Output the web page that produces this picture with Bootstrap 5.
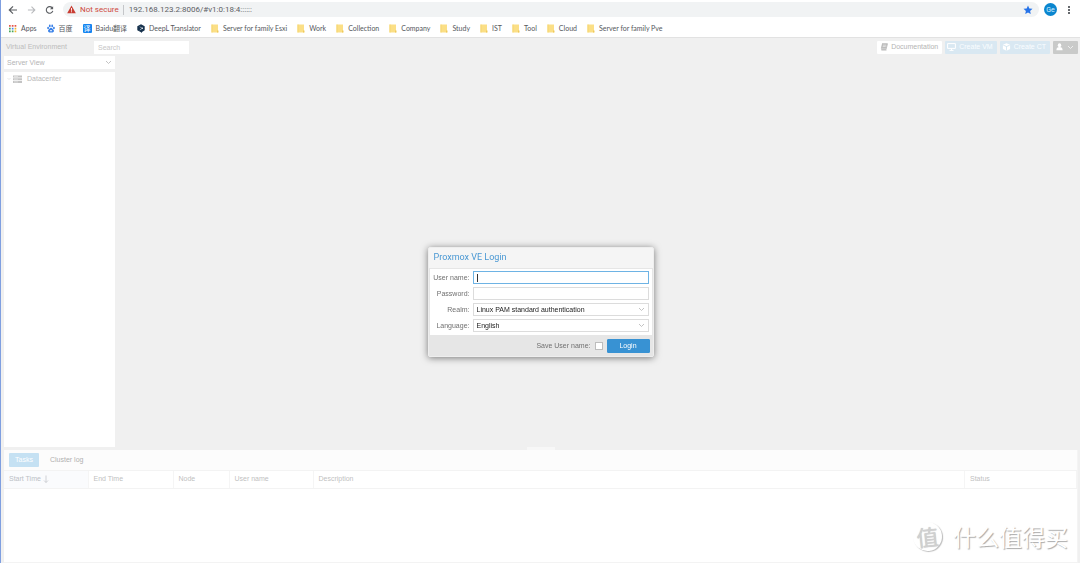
<!DOCTYPE html>
<html lang="en">
<head>
<meta charset="utf-8">
<meta name="viewport" content="width=device-width, initial-scale=1">
<title>Proxmox Virtual Environment</title>
<link href="https://cdn.jsdelivr.net/npm/bootstrap@5.3.0/dist/css/bootstrap.min.css" rel="stylesheet">
<style>
  body { font: 7px/10px "Liberation Sans", Arial, sans-serif; color: #c4c4c4; background: #f0f0f0; border-left: 1px solid #7f9fe0; }
  button, input, select { font: inherit; color: inherit; }
  svg { display: block; flex: none; }
  /* browser chrome */
  .chrome { background: #fff; border-bottom: 1px solid #e2e2e2; font-family: Roboto, "Noto Sans CJK SC", sans-serif; color: #55585c; }
  .address-row { height: 19px; padding: 0 7px; gap: 9px; }
  .icon-btn { border: 0; padding: 0; background: none; }
  .omnibox { background: #f1f3f4; border-radius: 8px; height: 15px; padding: 0 6px 0 4px; font-size: 8px; margin-right: -4px; }
  .omnibox input { border: 0; background: none; outline: 0; padding: 0; color: #5c6064; min-width: 0; }
  .not-secure { color: #cf4a40; margin: 0 4px; }
  .sep { width: 1px; height: 10px; background: #c4c6c9; margin-right: 5px; }
  .avatar { width: 13px; height: 13px; border-radius: 50%; background: #0b86cf; color: #d8efff; font-size: 7px; }
  .bookmarks { height: 18px; padding: 0 7px; gap: 10px; font-family: Lato, "Noto Sans CJK SC", sans-serif; }
  .bookmarks a { color: inherit; text-decoration: none; gap: 4px; white-space: nowrap; }
  .baidu-fy { width: 9px; height: 9px; border-radius: 1px; background: #1484f0; color: #fff; font-size: 7px; line-height: 9px; text-align: center; }
  /* masked application */
  .topbar { height: 17px; padding: 1px 2px 0 5px; gap: 3px; }
  .product { color: #bcbcbc; width: 85px; }
  .search { width: 95px; height: 13px; border: 0; background: #fff; padding: 0 4px; }
  .search::placeholder { color: #c6c6c6; opacity: 1; }
  .tool { border: 0; border-radius: 1px; height: 13px; padding: 0 4px 0 3px; gap: 3px; background: #fff; color: #b4b4b4; }
  .tool-blue { background: #d9e8f2; color: #fafdff; padding: 0 4px 0 2px; }
  .tool-user { background: #c9cac9; color: #fff; gap: 4px; }
  .workspace { padding: 1px 0 3px 3px; }
  .sidebar { width: 111px; gap: 3px; }
  .arrow-select { appearance: none; border: 0; border-radius: 0; background: #fff url("data:image/svg+xml,%3Csvg xmlns='http://www.w3.org/2000/svg' viewBox='0 0 7 5'%3E%3Cpath d='M1 1l2.500 2.500L6 1' fill='none' stroke='%23b4b4b4' stroke-width='.8'/%3E%3C/svg%3E") no-repeat right 3px center / 7px 5px; padding: 0 3px; }
  .view { height: 13px; color: #b4b4b4; }
  .tree { background: #fff; padding: 2px 3px; }
  .tree-item { gap: 5px; color: #b8b8b8; }
  .logs { height: 113px; margin: 0 2px 0 3px; background: #fff; border-right: 1px solid #f4f4f4; border-bottom: 1px solid #f3f3f3; }
  .grip { width: 28px; height: 3px; top: -3px; left: 50%; margin-left: -14px; background: #f7f7f7; }
  .tabs { height: 21px; background: #fcfcfc; padding: 0 5px; gap: 11px; border-bottom: 1px solid #f3f3f3; }
  .tab-btn { border: 0; padding: 0; height: 14px; background: none; color: #b0b0b0; }
  .tab-on { background: #c5e1f3; color: #fff; width: 30px; border-radius: 1px; }
  .grid-head { table-layout: fixed; width: 100%; border-collapse: collapse; }
  .grid-head th { height: 17px; font-weight: 400; color: #bfbfbf; padding: 0 5px; border-right: 1px solid #f5f5f5; border-bottom: 1px solid #f3f3f3; }
  .grid-head th:first-child { background: #fafbfd; color: #bbc0c5; }
  /* login dialog */
  .overlay { inset: 38px 0 0 1px; padding-top: 3px; pointer-events: none; }
  .login { width: 226px; background: #f5f5f5; border: 1px solid #eee; border-radius: 2px; box-shadow: 0 1px 7px rgba(0,0,0,.5); color: #707070; pointer-events: auto; }
  .login h1 { font: 400 9px/18px Roboto, sans-serif; margin: 0; padding: 0 5px 2px; color: #4a98d3; }
  .fields { background: #fff; border: 1px solid #e6e6e6; border-width: 1px 1px 0; margin: 0; padding: 2px 3px 3px 2px; row-gap: 3px; }
  .fields label { width: 38px; text-align: right; margin-right: 3px; white-space: nowrap; }
  .field { height: 13px; min-width: 0; border: 1px solid #dcdcdc; padding: 0 3px; color: #222; outline: 0; background-color: #fff; flex: 1; }
  .field:focus { border-color: #6eb3e4; }
  .caret-field { background: linear-gradient(#333, #333) no-repeat 3px center / 1px 8px #fff; caret-color: transparent; border-color: #6eb3e4; }
  .login-foot { background: #e6e6e6; height: 21px; padding: 0 3px; gap: 4px; }
  .login-foot input { appearance: none; width: 8px; height: 8px; border: 1px solid #bdbdbd; background: #fff; margin: 0; }
  .btn-login { width: 43px; height: 14px; padding: 0; font-size: 7px; line-height: 12px; border: 1px solid #3892d3; border-radius: 1px; background: #3892d3; color: #fff; font-weight: 400; }
  .watermark { right: 9px; bottom: 10px; gap: 11px; font: 23px/32px "Noto Sans CJK SC", sans-serif; color: #fff; text-shadow: 1px 1px 1px #a9a9a9; }
  .seal { width: 29px; height: 29px; border-radius: 50%; line-height: 28px; font-size: 22px; transform: rotate(-6deg); color: #d0d0d0; text-shadow: 0 0 1px #bbb; box-shadow: 1px 1px 1px #bdbdbd; }
</style>
</head>
<body class="vh-100 d-flex flex-column overflow-hidden">
<svg width="0" height="0" class="position-absolute" aria-hidden="true">
  <symbol id="folder" viewBox="0 0 8 9"><path d="M.5.5H7v8H.5z" fill="#fbdf86"/><path d="M.5.5h1v8h-1z" fill="#f6d571"/><path d="M6 6.500h1.500v2H6z" fill="#efc95c"/></symbol>
</svg>
<header class="chrome">
  <div class="address-row d-flex align-items-center">
    <button class="icon-btn" aria-label="Back"><svg width="10" height="10" viewBox="0 0 10 10" fill="none" stroke="#5b5e62" stroke-width="1.200"><path d="M9 5H1.500M5 1.300L1.300 5 5 8.700"/></svg></button>
    <button class="icon-btn" aria-label="Forward"><svg width="9" height="10" viewBox="0 0 10 10" fill="none" stroke="#b8babd" stroke-width="1.200"><path d="M1 5h7.500M5 1.300L8.700 5 5 8.700"/></svg></button>
    <button class="icon-btn" aria-label="Reload"><svg width="9" height="10" viewBox="0 0 10 10"><path d="M8.300 3A3.700 3.700 0 1 0 8.700 6" fill="none" stroke="#5b5e62" stroke-width="1.200"/><path d="M9 .8v3.500H5.500z" fill="#5b5e62"/></svg></button>
    <div class="omnibox d-flex align-items-center flex-fill">
      <svg width="9" height="9" viewBox="0 0 9 9"><path d="M4.500.5L8.800 8.300H.2z" fill="#c83c32"/><path d="M4.500 3v2.700M4.500 6.300v1" stroke="#fff" stroke-width=".9"/></svg>
      <span class="not-secure">Not secure</span><span class="sep"></span>
      <input class="flex-fill" aria-label="Address" value="192.168.123.2:8006/#v1:0:18:4::::::">
      <button class="icon-btn" aria-label="Bookmark"><svg width="10" height="10" viewBox="0 0 10 10"><path d="M5 .6l1.300 2.900 3.200.3-2.400 2.100.7 3.200L5 7.400 2.200 9.100l.7-3.200L.5 3.800l3.200-.3z" fill="#2673e8"/></svg></button>
    </div>
    <button class="icon-btn avatar d-flex align-items-center justify-content-center">Ge</button>
    <button class="icon-btn" aria-label="Menu"><svg width="7" height="10" viewBox="0 0 7 10" fill="#66696d"><path d="M2 1h2v2H2zM2 4h2v2H2zM2 7h2v2H2z"/></svg></button>
  </div>
  <nav class="bookmarks d-flex align-items-center">
    <a href="#" class="d-flex align-items-center"><svg width="9" height="9" viewBox="0 0 9 9"><path d="M1 1h1.700v1.700H1zM3.800 1h1.700v1.700H3.800zM6.600 1h1.700v1.700H6.600z" fill="#e5564a"/><path d="M1 3.800h1.700v1.700H1z" fill="#48a65a"/><path d="M3.800 3.800h1.700v1.700H3.800z" fill="#4285f4"/><path d="M6.600 3.800h1.700v1.700H6.600zM6.600 6.600h1.700v1.700H6.600z" fill="#f3b72f"/><path d="M1 6.600h1.700v1.700H1zM3.800 6.600h1.700v1.700H3.800z" fill="#48a65a"/></svg>Apps</a>
    <a href="#" class="d-flex align-items-center"><svg width="8" height="9" viewBox="0 0 8 9" fill="#3b82e8"><ellipse cx="1.100" cy="4" rx=".9" ry="1.200"/><ellipse cx="2.800" cy="1.900" rx=".9" ry="1.300"/><ellipse cx="5.200" cy="1.900" rx=".9" ry="1.300"/><ellipse cx="6.900" cy="4" rx=".9" ry="1.200"/><path d="M4 3.800c1.200 0 1.600 1.300 2.500 2 .9.800.6 2.600-.9 2.600H2.400C.9 8.400.6 6.600 1.500 5.800c.9-.7 1.300-2 2.500-2z"/><path d="M3 6h2v1.300H3z" fill="#c9def9"/></svg>百度</a>
    <a href="#" class="d-flex align-items-center"><span class="baidu-fy">译</span>Baidu翻译</a>
    <a href="#" class="d-flex align-items-center"><svg width="8" height="9" viewBox="0 0 8 9"><path d="M4 .3l3.700 2v4L5 7.900v1L4 8.300.3 6.300v-4z" fill="#17324d"/><path d="M2.700 2.800l2.600 1.500L2.800 6" fill="none" stroke="#b9c8d6" stroke-width=".7"/><circle cx="5.300" cy="4.300" r=".7" fill="#fff"/></svg>DeepL Translator</a>
    <a href="#" class="d-flex align-items-center"><svg width="8" height="9"><use href="#folder"/></svg>Server for family Esxi</a>
    <a href="#" class="d-flex align-items-center"><svg width="8" height="9"><use href="#folder"/></svg>Work</a>
    <a href="#" class="d-flex align-items-center"><svg width="8" height="9"><use href="#folder"/></svg>Collection</a>
    <a href="#" class="d-flex align-items-center"><svg width="8" height="9"><use href="#folder"/></svg>Company</a>
    <a href="#" class="d-flex align-items-center"><svg width="8" height="9"><use href="#folder"/></svg>Study</a>
    <a href="#" class="d-flex align-items-center"><svg width="8" height="9"><use href="#folder"/></svg>IST</a>
    <a href="#" class="d-flex align-items-center"><svg width="8" height="9"><use href="#folder"/></svg>Tool</a>
    <a href="#" class="d-flex align-items-center"><svg width="8" height="9"><use href="#folder"/></svg>Cloud</a>
    <a href="#" class="d-flex align-items-center"><svg width="8" height="9"><use href="#folder"/></svg>Server for family Pve</a>
  </nav>
</header>

<div class="topbar d-flex align-items-center">
  <span class="product text-nowrap">Virtual Environment</span>
  <input class="search me-auto" placeholder="Search" aria-label="Search">
  <button class="tool d-flex align-items-center"><svg width="8" height="8" viewBox="0 0 8 8"><path d="M2 .7h5.500L6 6.500H1.500v.6h5" fill="none" stroke="#bdbdbd" stroke-width=".9"/><path d="M2 .7h5.300L6 5.800H.8z" fill="#bdbdbd"/><path d="M3 2.200h3M2.700 3.500h3" stroke="#fff" stroke-width=".5"/></svg>Documentation</button>
  <button class="tool tool-blue d-flex align-items-center"><svg width="9" height="8" viewBox="0 0 9 8"><path d="M.6.6h7.800v4.800H.6zM4.500 5.400v1.800M2.500 7.400h4" fill="none" stroke="#fff" stroke-width="1"/></svg>Create VM</button>
  <button class="tool tool-blue d-flex align-items-center"><svg width="9" height="8" viewBox="0 0 8 8"><path d="M4 .3l3.600 1.500v4.300L4 7.800.4 6.100V1.800z" fill="#fff"/><path d="M.8 2.200L4 3.500l3.200-1.300M4 3.500v4" fill="none" stroke="#c6dceb" stroke-width=".7"/></svg>Create CT</button>
  <button class="tool tool-user d-flex align-items-center" aria-label="User menu"><svg width="7" height="8" viewBox="0 0 7 8" fill="#fff"><ellipse cx="3.500" cy="2.300" rx="1.700" ry="2"/><path d="M.4 7.300C.4 5 1.500 4 3.500 4s3.100 1 3.100 3.300z"/></svg><svg width="7" height="5" viewBox="0 0 7 5"><path d="M1 1l2.500 2.500L6 1" fill="none" stroke="#f2f2f2" stroke-width=".9"/></svg></button>
</div>

<main class="workspace d-flex flex-fill">
  <aside class="sidebar d-flex flex-column">
    <select class="arrow-select view" aria-label="View"><option>Server View</option></select>
    <div class="tree flex-fill">
      <div class="tree-item d-flex align-items-center"><svg width="15" height="8" viewBox="0 0 15 8"><path d="M.5 3l1.500 1.500L3.500 3" fill="none" stroke="#dedede" stroke-width=".7"/><path d="M6 .5h9v2H6zM6 3.200h9v2H6zM6 5.900h9v2H6z" fill="#c3c3c3"/><path d="M7 1.500h4M7 4.200h4M7 6.900h4" stroke="#eee" stroke-width=".6"/></svg>Datacenter</div>
    </div>
  </aside>
</main>

<section class="logs position-relative">
  <div class="grip position-absolute"></div>
  <div class="tabs d-flex align-items-center">
    <button class="tab-btn tab-on">Tasks</button>
    <button class="tab-btn">Cluster log</button>
  </div>
  <table class="grid-head">
    <colgroup><col width="84"><col width="85"><col width="56"><col width="84"><col><col width="112"></colgroup>
    <thead><tr><th><span class="d-flex align-items-center">Start Time&nbsp;<svg width="6" height="8" viewBox="0 0 6 8"><path d="M3 .5v7M1 5.500l2 2 2-2" fill="none" stroke="#c4c8cc" stroke-width=".8"/></svg></span></th><th>End Time</th><th>Node</th><th>User name</th><th>Description</th><th>Status</th></tr></thead>
  </table>
  <div class="watermark position-absolute d-flex align-items-center"><span class="seal text-center">值</span><span>什么值得买</span></div>
</section>

<div class="overlay position-fixed d-flex align-items-center justify-content-center">
  <form class="login">
    <h1>Proxmox VE Login</h1>
    <div class="fields d-flex flex-column">
      <div class="d-flex align-items-center"><label for="user">User name:</label><input class="field caret-field" id="user" autofocus></div>
      <div class="d-flex align-items-center"><label for="pass">Password:</label><input class="field" id="pass" type="password"></div>
      <div class="d-flex align-items-center"><label for="realm">Realm:</label><select class="field arrow-select" id="realm"><option>Linux PAM standard authentication</option></select></div>
      <div class="d-flex align-items-center"><label for="lang">Language:</label><select class="field arrow-select" id="lang"><option>English</option></select></div>
    </div>
    <div class="login-foot d-flex align-items-center justify-content-end">
      <label for="save">Save User name:</label><input type="checkbox" id="save">
      <button type="button" class="btn btn-login">Login</button>
    </div>
  </form>
</div>
<script src="https://cdn.jsdelivr.net/npm/bootstrap@5.3.0/dist/js/bootstrap.bundle.min.js"></script>
</body>
</html>
